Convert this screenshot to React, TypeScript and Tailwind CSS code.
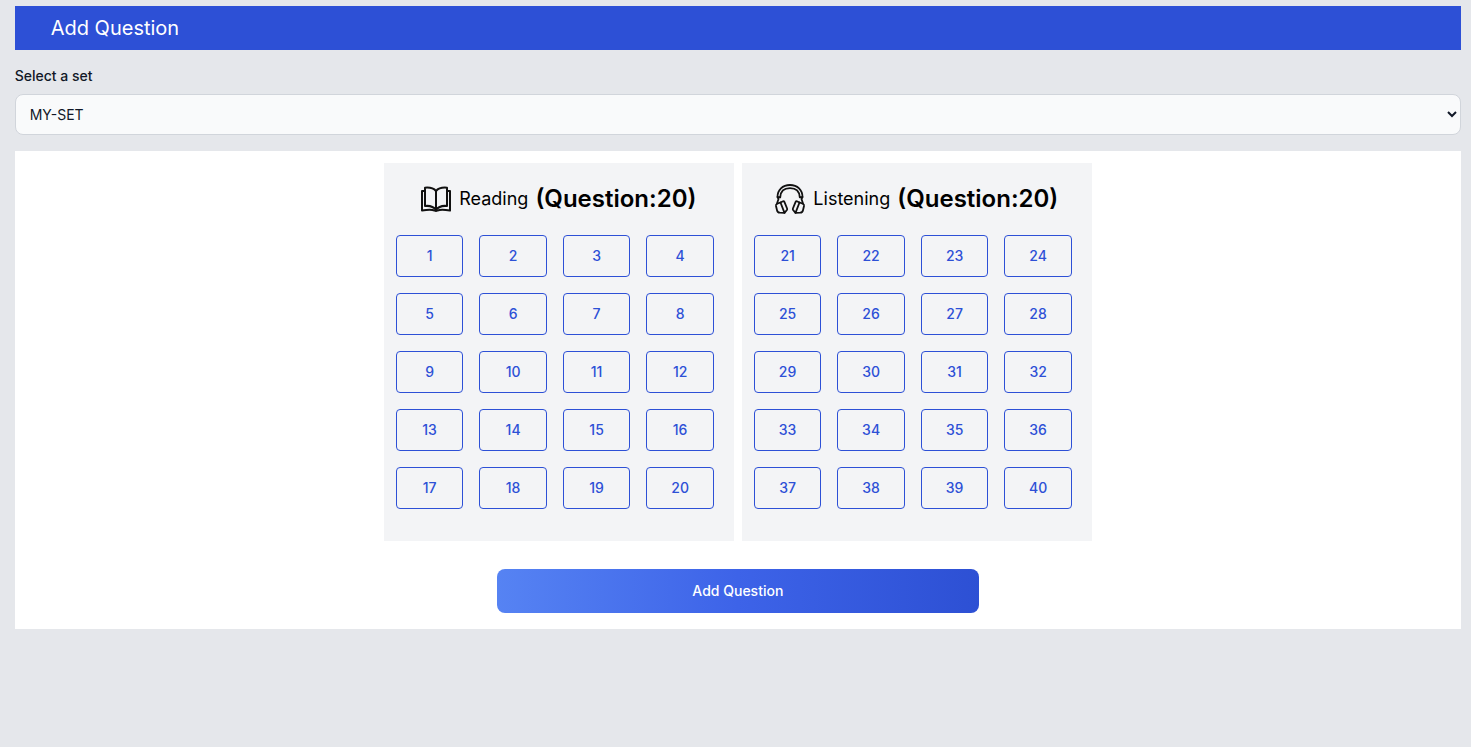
import type { ReactNode } from "react";

function BookIcon() {
  return (
    <svg viewBox="0 0 32 32" className="size-8" fill="none" stroke="#111111" strokeWidth="2" strokeLinejoin="round" aria-hidden="true">
      <path d="M16 8C13.500 5 9.500 4.300 5 4.700v18.300C9.500 22.500 13.500 23.500 16 27c2.500-3.500 6.500-4.500 11-4V4.700C22.500 4.300 18.500 5 16 8z" />
      <path d="M16 8v19" />
      <path d="M5 8H2v19.500c5-.8 10-1 12.500 0 .9.500 2.100.5 3 0 2.500-1 7.500-.8 12.500 0V8h-3" />
    </svg>
  );
}

function HeadphonesIcon() {
  return (
    <svg viewBox="0 0 32 32" className="size-8" fill="none" stroke="#111111" strokeWidth="1.800" strokeLinejoin="round" strokeLinecap="round" aria-hidden="true">
      <path d="M3.500 14C3.500 7 8.500 2 16 2s12.500 5 12.500 12l-2.700.4C25.500 8.500 22 5.200 16 5.200S6.500 8.500 6.200 14.400z" />
      <path d="M3.500 14l1 2-1.500 4.500M28.500 14l-1 2 1.500 4.500" />
      <path d="M6.500 19.500l2.600-1.200c.6-.2 1 0 1.300.6l2.700 6.600c.2.600.1 1-.2 1.500l-2.400 2.800z" />
      <path d="M6.500 19.500l-3.300 1.200c-.9.400-1.400 1.300-1.200 2.300l1 4.200c.3 1.500 1.300 2.400 2.800 2.500l4.700.1" />
      <path d="M25.500 19.500l-2.600-1.200c-.6-.2-1 0-1.300.6l-2.700 6.600c-.2.600-.1 1 .2 1.500l2.400 2.800z" />
      <path d="M25.500 19.500l3.300 1.200c.9.400 1.400 1.300 1.200 2.300l-1 4.200c-.3 1.500-1.300 2.400-2.800 2.500l-4.700.1" />
    </svg>
  );
}

type SectionProps = { title: string; icon: ReactNode; first: number; count: number };

function QuestionSection({ title, icon, first, count }: SectionProps) {
  const numbers = Array.from({ length: count }, (_, i) => first + i);
  return (
    <section className="w-full max-w-[350px] bg-[#f3f4f6] pt-5 pr-5 pb-8 pl-3">
      <div className="flex items-center justify-center gap-[7px] pl-[7px]">
        {icon}
        <span className="text-lg text-black">{title}</span>
        <h2 className="text-2xl font-semibold text-black">(Question:{count})</h2>
      </div>
      <div className="mt-5 grid grid-cols-4 gap-4">
        {numbers.map((n) => (
          <button
            key={n}
            type="button"
            className="rounded border border-[#2d50d6] py-2.5 text-center text-sm font-medium text-[#2d50d6] hover:bg-[#2d50d6] hover:text-white"
          >
            {n}
          </button>
        ))}
      </div>
    </section>
  );
}

export default function App() {
  return (
    <div className="min-h-screen bg-[#e5e7eb] pt-1.5 pr-2.5 pb-4 pl-[1%] font-['Inter',sans-serif]">
      <header className="bg-[#2d50d6] px-9 py-2">
        <h1 className="text-xl text-white">Add Question</h1>
      </header>
      <main>
        <label htmlFor="question-set" className="mt-4 mb-2 block text-sm font-medium text-[#111827]">
          Select a set
        </label>
        <select
          id="question-set"
          className="block h-[41px] w-full rounded-lg border border-[#d1d5db] bg-[#f9fafb] px-2.5 text-sm text-[#111827]"
        >
          <option>MY-SET</option>
        </select>
        <div className="mt-4 bg-white pt-3 pb-4">
          <div className="flex justify-center gap-2">
            <QuestionSection title="Reading" icon={<BookIcon />} first={1} count={20} />
            <QuestionSection title="Listening" icon={<HeadphonesIcon />} first={21} count={20} />
          </div>
          <button
            type="button"
            className="mx-auto mt-7 block w-1/3 rounded-lg bg-linear-to-r/srgb from-[#5683f3] via-[#3d63e8] to-[#2d50d4] py-3 text-center text-sm font-medium text-white"
          >
            Add Question
          </button>
        </div>
      </main>
    </div>
  );
}
